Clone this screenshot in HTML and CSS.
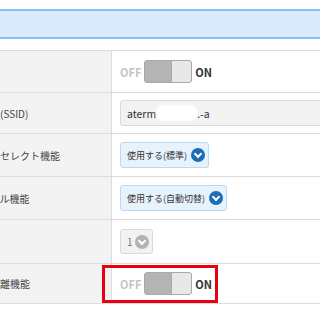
FILE: index.html
```html
<!DOCTYPE html>
<html lang="ja">
<head>
  <meta charset="UTF-8">
  <title>無線LAN詳細設定</title>
  <link rel="stylesheet" href="styles.css">
</head>
<body>
<div class="title-band"></div>

<div class="settings">
  <div class="row">
    <div class="label">無線機能</div>
    <div class="value">
      <span class="sw-off">OFF</span>
      <span class="switch"><span class="knob"></span></span>
      <span class="sw-on">ON</span>
    </div>
  </div>

  <div class="row">
    <div class="label">ネットワーク名(SSID)</div>
    <div class="value">
      <div class="text-input">aterm<span class="masked"></span>.-a</div>
    </div>
  </div>

  <div class="row">
    <div class="label">オートチャネルセレクト機能</div>
    <div class="value">
      <div class="select">使用する(標準)<span class="chev"></span></div>
    </div>
  </div>

  <div class="row">
    <div class="label">デュアルチャネル機能</div>
    <div class="value">
      <div class="select">使用する(自動切替)<span class="chev"></span></div>
    </div>
  </div>

  <div class="row">
    <div class="label">送信出力</div>
    <div class="value">
      <div class="select disabled">1<span class="chev"></span></div>
    </div>
  </div>

  <div class="row highlight">
    <div class="label">ネットワーク分離機能</div>
    <div class="value">
      <span class="sw-off">OFF</span>
      <span class="switch"><span class="knob"></span></span>
      <span class="sw-on">ON</span>
    </div>
  </div>
</div>
</body>
</html>
```

FILE: styles.css
```css
body {
  margin: 0;
  background: #fff;
  font-family: "Noto Sans CJK JP", "Noto Sans", sans-serif;
  color: #444;
  overflow: hidden;
}
.title-band {
  margin-top: 9px;
  height: 26px;
  background: #daeafa;
  border-top: 2px solid #86c1f0;
  border-bottom: 2px solid #86c1f0;
}
.settings {
  margin-top: 11px;
  margin-left: -75px;
  width: 420px;
  border-top: 1px solid #dcdcdc;
  display: grid;
  grid-template-rows: 42px 41px 43px 43px 44px 40px;
}
.row {
  box-sizing: border-box;
  display: grid;
  grid-template-columns: 187px 1fr;
  border-bottom: 1px solid #dcdcdc;
  position: relative;
}
.label {
  background: #f3f3f3;
  border-right: 1px solid #dcdcdc;
  font-size: 10px;
  display: flex;
  align-items: center;
  padding-left: 5px;
  white-space: nowrap;
  overflow: hidden;
}
.value {
  display: flex;
  align-items: center;
  padding-left: 8px;
}
.sw-off, .sw-on {
  font-size: 11px;
  font-weight: 700;
}
.sw-off {
  color: #c4c4c4;
  margin-right: 3px;
}
.sw-on {
  color: #333;
  margin-left: 3px;
}
.switch {
  width: 46px;
  height: 21px;
  border: 1px solid #a9a9a9;
  border-radius: 3px;
  background: #b4b4b4;
  display: flex;
  justify-content: flex-end;
}
.knob {
  width: 19px;
  height: 21px;
  background: #e8e8e8;
  border-left: 1px solid #a9a9a9;
  border-radius: 0 2px 2px 0;
}
.text-input {
  width: 100%;
  height: 24px;
  background: #f2f2f2;
  border: 1px solid #dadada;
  border-radius: 3px;
  font-size: 10.5px;
  color: #333;
  display: flex;
  align-items: center;
  padding-left: 6px;
}
.masked {
  width: 40px;
  height: 14px;
  margin-left: 1px;
  background: #fff;
  border-radius: 7px;
  box-shadow: 0 0 3px 1px #fff;
}
.select {
  height: 24px;
  background: #e6f2fc;
  border: 1px solid #b8daf4;
  border-radius: 3px;
  font-size: 9px;
  color: #333;
  display: flex;
  align-items: center;
  padding: 0 3px 0 6px;
}
.chev {
  width: 14px;
  height: 14px;
  margin-left: 4px;
  border-radius: 50%;
  background: #1c6db5;
  position: relative;
}
.chev::after {
  content: "";
  position: absolute;
  left: 4px;
  top: 3px;
  width: 4px;
  height: 4px;
  border-right: 2px solid #fff;
  border-bottom: 2px solid #fff;
  transform: rotate(45deg);
}
.select.disabled {
  background: #f2f2f2;
  border-color: #dadada;
  color: #777;
  font-size: 10px;
  height: 23px;
}
.select.disabled .chev {
  background: #b3b3b3;
  margin-left: 2px;
}
.highlight::after {
  content: "";
  position: absolute;
  left: 177px;
  top: 1px;
  width: 110px;
  height: 32px;
  border: 3px solid #e60012;
}
```
